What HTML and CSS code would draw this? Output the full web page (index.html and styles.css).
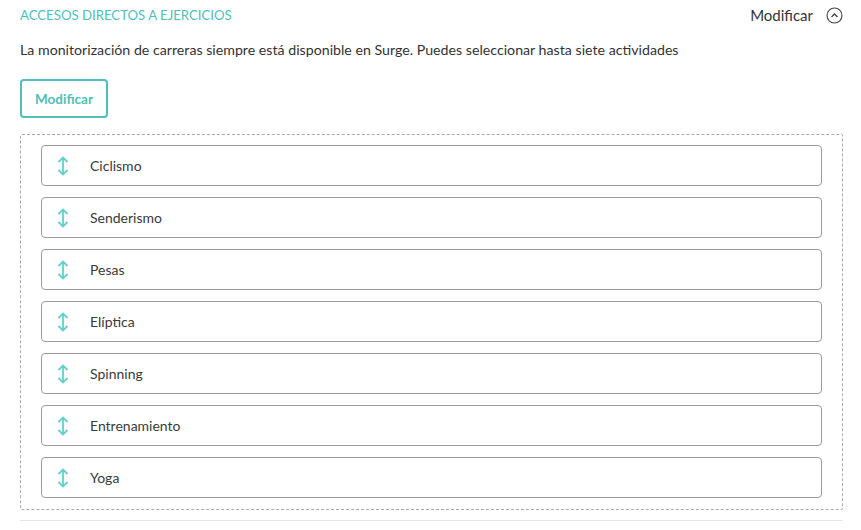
FILE: index.html
```html
<!DOCTYPE html>
<html lang="es">
<head>
<meta charset="utf-8">
<link rel="stylesheet" href="styles.css">
</head>
<body>
<div class="page">
  <div class="header">
    <div class="title">ACCESOS DIRECTOS A EJERCICIOS</div>
    <div class="toggle">
      <span>Modificar</span>
      <svg class="circle-icon" width="17" height="17" viewBox="0 0 17 17"><circle cx="8.5" cy="8.5" r="7.5" fill="none" stroke="#444" stroke-width="1.1"/><path d="M5.5 10 L8.5 7 L11.5 10" fill="none" stroke="#444" stroke-width="1.3"/></svg>
    </div>
  </div>
  <p class="desc">La monitorización de carreras siempre está disponible en Surge. Puedes seleccionar hasta siete actividades</p>
  <button class="btn">Modificar</button>
  <div class="list">
    <div class="item"><svg class="drag" width="14" height="20" viewBox="0 0 14 20"><path d="M7 1.5 V18.5 M2.5 6 L7 1.5 L11.5 6 M2.5 14 L7 18.5 L11.5 14" fill="none" stroke="#66cfca" stroke-width="1.8"/></svg><span>Ciclismo</span></div>
    <div class="item"><svg class="drag" width="14" height="20" viewBox="0 0 14 20"><path d="M7 1.5 V18.5 M2.5 6 L7 1.5 L11.5 6 M2.5 14 L7 18.5 L11.5 14" fill="none" stroke="#66cfca" stroke-width="1.8"/></svg><span>Senderismo</span></div>
    <div class="item"><svg class="drag" width="14" height="20" viewBox="0 0 14 20"><path d="M7 1.5 V18.5 M2.5 6 L7 1.5 L11.5 6 M2.5 14 L7 18.5 L11.5 14" fill="none" stroke="#66cfca" stroke-width="1.8"/></svg><span>Pesas</span></div>
    <div class="item"><svg class="drag" width="14" height="20" viewBox="0 0 14 20"><path d="M7 1.5 V18.5 M2.5 6 L7 1.5 L11.5 6 M2.5 14 L7 18.5 L11.5 14" fill="none" stroke="#66cfca" stroke-width="1.8"/></svg><span>Elíptica</span></div>
    <div class="item"><svg class="drag" width="14" height="20" viewBox="0 0 14 20"><path d="M7 1.5 V18.5 M2.5 6 L7 1.5 L11.5 6 M2.5 14 L7 18.5 L11.5 14" fill="none" stroke="#66cfca" stroke-width="1.8"/></svg><span>Spinning</span></div>
    <div class="item"><svg class="drag" width="14" height="20" viewBox="0 0 14 20"><path d="M7 1.5 V18.5 M2.5 6 L7 1.5 L11.5 6 M2.5 14 L7 18.5 L11.5 14" fill="none" stroke="#66cfca" stroke-width="1.8"/></svg><span>Entrenamiento</span></div>
    <div class="item"><svg class="drag" width="14" height="20" viewBox="0 0 14 20"><path d="M7 1.5 V18.5 M2.5 6 L7 1.5 L11.5 6 M2.5 14 L7 18.5 L11.5 14" fill="none" stroke="#66cfca" stroke-width="1.8"/></svg><span>Yoga</span></div>
  </div>
  <div class="rule"></div>
</div>
</body>
</html>
```
FILE: styles.css
```css
* { box-sizing: border-box; }
html, body { margin: 0; padding: 0; background: #fff; }
body { font-family: "Lato", "Open Sans", sans-serif; color: #333; }
.page { width: 823px; margin-left: 20px; padding-top: 5px; }
.header { display: flex; justify-content: space-between; align-items: center; height: 20px; }
.title { color: #4fbfba; font-size: 13.2px; }
.toggle { display: flex; align-items: center; gap: 13px; font-size: 15px; color: #333; }
.circle-icon { display: block; }
.desc { margin: 16px 0 0; font-size: 14.2px; line-height: 17px; color: #333; }
.btn { display: block; margin-top: 21px; width: 88px; height: 39px; border: 2px solid #4fbfba; border-radius: 4px; background: #fff; color: #4fbfba; font-family: inherit; font-weight: 700; font-size: 13.5px; padding: 0; }
.list { margin-top: 16px; border: 1px dashed #a8a8ad; border-radius: 2px; padding: 10px 20px 11px; display: flex; flex-direction: column; gap: 11px; }
.item { height: 41px; border: 1px solid #9b9ba0; border-radius: 4px; display: flex; align-items: center; padding-left: 14px; font-size: 14px; color: #3a3a3a; }
.drag { display: block; margin-right: 20px; }
.rule { margin-top: 10px; height: 1px; background: #e6e6e6; }
```
